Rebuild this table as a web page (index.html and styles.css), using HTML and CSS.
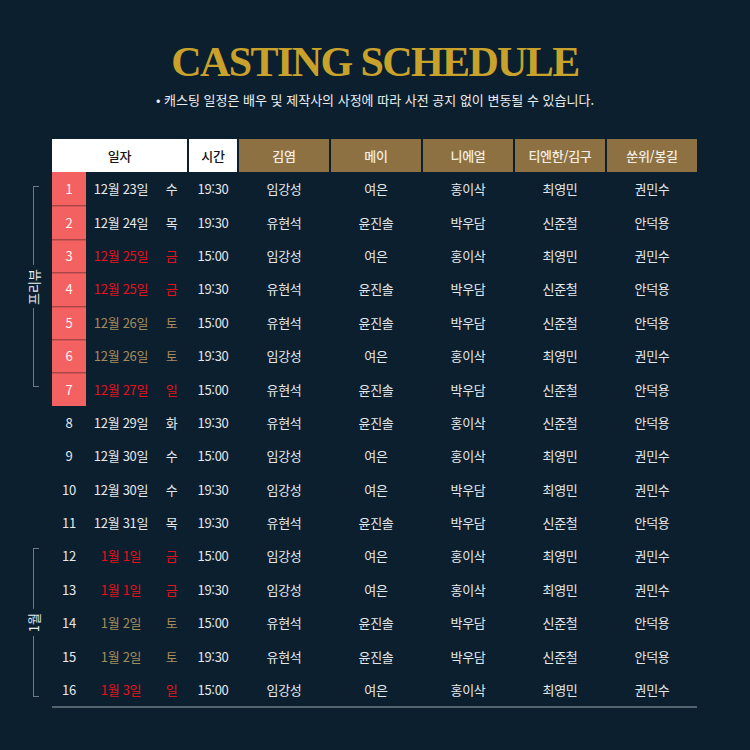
FILE: index.html
```html
<!DOCTYPE html>
<html lang="ko">
<head>
<meta charset="utf-8">
<title>Casting Schedule</title>
<link rel="stylesheet" href="styles.css">
</head>
<body>
<main class="page">
  <header class="intro">
    <h1 class="title">CASTING SCHEDULE</h1>
    <p class="notice">• 캐스팅 일정은 배우 및 제작사의 사정에 따라 사전 공지 없이 변동될 수 있습니다.</p>
  </header>

  <section class="board">
    <div class="rail">
      <div class="brk brk-preview">
        <span class="seg seg-top"></span>
        <span class="brk-label">프리뷰</span>
        <span class="seg seg-bottom"></span>
      </div>
      <div class="brk brk-jan">
        <span class="seg seg-top"></span>
        <span class="brk-label">1월</span>
        <span class="seg seg-bottom"></span>
      </div>
    </div>

    <div class="table">
      <div class="row head">
        <div class="hc hc-light hc-date">일자</div>
        <div class="hc hc-light">시간</div>
        <div class="hc hc-gold">김염</div>
        <div class="hc hc-gold">메이</div>
        <div class="hc hc-gold">니에얼</div>
        <div class="hc hc-gold">티엔한/김구</div>
        <div class="hc hc-gold">쑨위/봉길</div>
      </div>

      <div class="row"><div class="c num pv">1</div><div class="c date">12월 23일</div><div class="c day">수</div><div class="c">19:30</div><div class="c">임강성</div><div class="c">여은</div><div class="c">홍이삭</div><div class="c">최영민</div><div class="c">권민수</div></div>
      <div class="row"><div class="c num pv pv-next">2</div><div class="c date">12월 24일</div><div class="c day">목</div><div class="c">19:30</div><div class="c">유현석</div><div class="c">윤진솔</div><div class="c">박우담</div><div class="c">신준철</div><div class="c">안덕용</div></div>
      <div class="row hol"><div class="c num pv pv-next">3</div><div class="c date">12월 25일</div><div class="c day">금</div><div class="c">15:00</div><div class="c">임강성</div><div class="c">여은</div><div class="c">홍이삭</div><div class="c">최영민</div><div class="c">권민수</div></div>
      <div class="row hol"><div class="c num pv pv-next">4</div><div class="c date">12월 25일</div><div class="c day">금</div><div class="c">19:30</div><div class="c">유현석</div><div class="c">윤진솔</div><div class="c">박우담</div><div class="c">신준철</div><div class="c">안덕용</div></div>
      <div class="row sat"><div class="c num pv pv-next">5</div><div class="c date">12월 26일</div><div class="c day">토</div><div class="c">15:00</div><div class="c">유현석</div><div class="c">윤진솔</div><div class="c">박우담</div><div class="c">신준철</div><div class="c">안덕용</div></div>
      <div class="row sat"><div class="c num pv pv-next">6</div><div class="c date">12월 26일</div><div class="c day">토</div><div class="c">19:30</div><div class="c">임강성</div><div class="c">여은</div><div class="c">홍이삭</div><div class="c">최영민</div><div class="c">권민수</div></div>
      <div class="row hol"><div class="c num pv pv-next">7</div><div class="c date">12월 27일</div><div class="c day">일</div><div class="c">15:00</div><div class="c">유현석</div><div class="c">윤진솔</div><div class="c">박우담</div><div class="c">신준철</div><div class="c">안덕용</div></div>
      <div class="row"><div class="c num">8</div><div class="c date">12월 29일</div><div class="c day">화</div><div class="c">19:30</div><div class="c">유현석</div><div class="c">윤진솔</div><div class="c">홍이삭</div><div class="c">신준철</div><div class="c">안덕용</div></div>
      <div class="row"><div class="c num">9</div><div class="c date">12월 30일</div><div class="c day">수</div><div class="c">15:00</div><div class="c">임강성</div><div class="c">여은</div><div class="c">홍이삭</div><div class="c">최영민</div><div class="c">권민수</div></div>
      <div class="row"><div class="c num">10</div><div class="c date">12월 30일</div><div class="c day">수</div><div class="c">19:30</div><div class="c">임강성</div><div class="c">여은</div><div class="c">박우담</div><div class="c">최영민</div><div class="c">권민수</div></div>
      <div class="row"><div class="c num">11</div><div class="c date">12월 31일</div><div class="c day">목</div><div class="c">19:30</div><div class="c">유현석</div><div class="c">윤진솔</div><div class="c">박우담</div><div class="c">신준철</div><div class="c">안덕용</div></div>
      <div class="row hol"><div class="c num">12</div><div class="c date">1월 1일</div><div class="c day">금</div><div class="c">15:00</div><div class="c">임강성</div><div class="c">여은</div><div class="c">홍이삭</div><div class="c">최영민</div><div class="c">권민수</div></div>
      <div class="row hol"><div class="c num">13</div><div class="c date">1월 1일</div><div class="c day">금</div><div class="c">19:30</div><div class="c">임강성</div><div class="c">여은</div><div class="c">홍이삭</div><div class="c">최영민</div><div class="c">권민수</div></div>
      <div class="row sat"><div class="c num">14</div><div class="c date">1월 2일</div><div class="c day">토</div><div class="c">15:00</div><div class="c">유현석</div><div class="c">윤진솔</div><div class="c">박우담</div><div class="c">신준철</div><div class="c">안덕용</div></div>
      <div class="row sat"><div class="c num">15</div><div class="c date">1월 2일</div><div class="c day">토</div><div class="c">19:30</div><div class="c">유현석</div><div class="c">윤진솔</div><div class="c">박우담</div><div class="c">신준철</div><div class="c">안덕용</div></div>
      <div class="row hol"><div class="c num">16</div><div class="c date">1월 3일</div><div class="c day">일</div><div class="c">15:00</div><div class="c">임강성</div><div class="c">여은</div><div class="c">홍이삭</div><div class="c">최영민</div><div class="c">권민수</div></div>
    </div>
  </section>
</main>
</body>
</html>
```

FILE: styles.css
```css
html, body {
  margin: 0;
  padding: 0;
  background: #0b1f2f;
}

body {
  width: 750px;
  height: 750px;
  overflow: hidden;
  font-family: "Noto Sans CJK KR", "Noto Sans", sans-serif;
  color: #e6e8ea;
}

.page {
  padding-top: 40px;
}

.intro {
  text-align: center;
}

.title {
  margin: 0;
  font-family: "Liberation Serif", "Times New Roman", serif;
  font-weight: 700;
  font-size: 42px;
  line-height: 44px;
  letter-spacing: -1.6px;
  color: #c9a22b;
}

.notice {
  margin: 6px 0 0;
  font-size: 13px;
  line-height: 20px;
  letter-spacing: 0;
  color: #eceef0;
}

.board {
  display: flex;
  margin-top: 29px;
  padding-left: 20px;
}

.rail {
  width: 32px;
  display: flex;
  flex-direction: column;
}

.brk {
  display: flex;
  flex-direction: column;
  margin-left: 13px;
  width: 6px;
}

.brk-preview {
  margin-top: 47px;
  height: 201px;
}

.brk-jan {
  margin-top: 161px;
  height: 149px;
}

.seg {
  flex: 1;
  border-left: 1px solid #6b7a86;
}

.seg-top {
  border-top: 1px solid #6b7a86;
}

.seg-bottom {
  border-bottom: 1px solid #6b7a86;
}

.brk-label {
  margin: 4px 0 4px -7px;
  width: 15px;
  writing-mode: vertical-rl;
  text-orientation: sideways;
  transform: rotate(180deg);
  font-size: 13px;
  line-height: 15px;
  text-align: center;
  color: #eceef0;
}

.table {
  width: 645px;
  border-bottom: 2px solid #55656f;
}

.row {
  display: grid;
  grid-template-columns: 34px 66px 31px 48px repeat(5, 90px);
  column-gap: 2px;
  height: 33.4px;
  font-size: 13px;
  letter-spacing: -0.3px;
}

.row.head {
  height: 33px;
}

.hc {
  display: flex;
  align-items: center;
  justify-content: center;
  font-size: 13px;
  font-weight: 500;
}

.hc-date {
  grid-column: span 3;
}

.hc-light {
  background: #ffffff;
  color: #151515;
}

.hc-gold {
  background: #8d7142;
  color: #f3ede2;
}

.c {
  display: flex;
  align-items: center;
  justify-content: center;
}

.pv {
  background: #f36161;
  color: #fff3f3;
}

.pv-next {
  box-shadow: inset 0 1px 0 #a84646, inset 0 2px 0 rgba(168, 70, 70, 0.45);
}

.hol .date,
.hol .day {
  color: #e5121c;
}

.sat .date,
.sat .day {
  color: #a48b5c;
}
```
